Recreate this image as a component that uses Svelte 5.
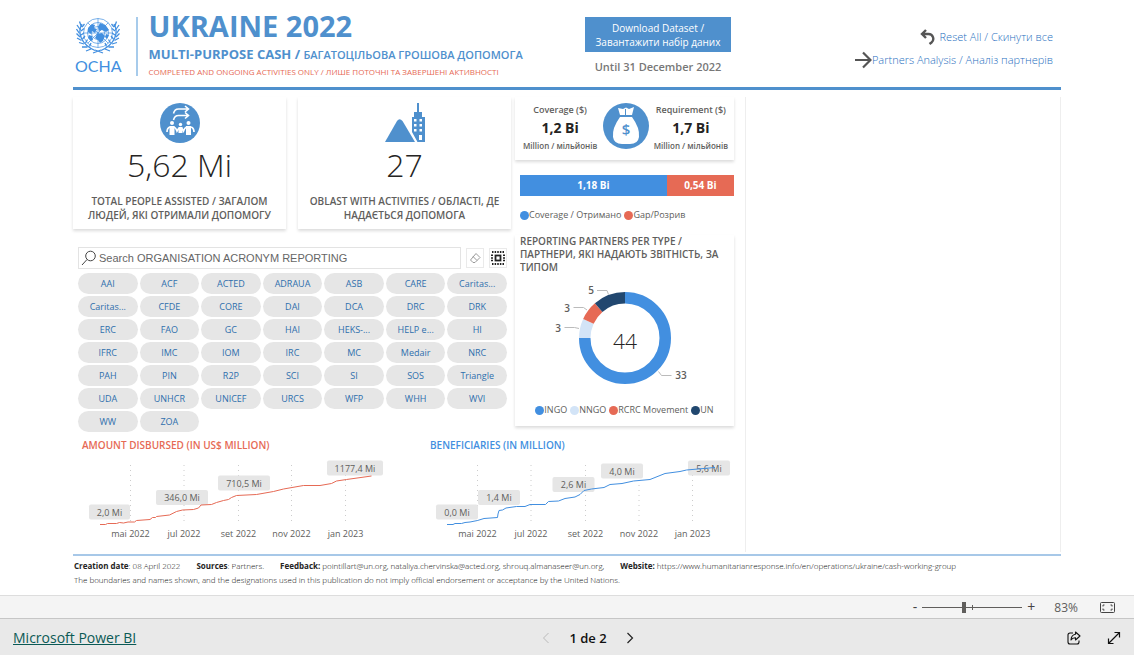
<script lang="ts">
	interface ChartLabel {
		x: number;
		y: number;
		width: number;
		text: string;
	}

	interface Chart {
		id: string;
		title: string;
		points: string;
		ticks: number[];
		labels: ChartLabel[];
	}

	const organisations = [
		'AAI', 'ACF', 'ACTED', 'ADRAUA', 'ASB', 'CARE', 'Caritas...',
		'Caritas...', 'CFDE', 'CORE', 'DAI', 'DCA', 'DRC', 'DRK',
		'ERC', 'FAO', 'GC', 'HAI', 'HEKS-...', 'HELP e...', 'HI',
		'IFRC', 'IMC', 'IOM', 'IRC', 'MC', 'Medair', 'NRC',
		'PAH', 'PIN', 'R2P', 'SCI', 'SI', 'SOS', 'Triangle',
		'UDA', 'UNHCR', 'UNICEF', 'URCS', 'WFP', 'WHH', 'WVI',
		'WW', 'ZOA'
	];

	const months = ['mai 2022', 'jul 2022', 'set 2022', 'nov 2022', 'jan 2023'];

	const charts: Chart[] = [
		{
			id: 'disbursed',
			title: 'AMOUNT DISBURSED (IN US$ MILLION)',
			points:
				'18,69.5 23.5,69.5 25.5,68.5 34.5,68.5 37.5,67.5 41.5,68 46,67 52.5,67 54.5,65.5 68,64.5 70.5,62.5 73.5,62.5 74.5,61.5 87.5,60 94.5,56.5 100.5,55 111.5,54.5 116.5,53 119,50 129.5,49.5 134.5,47.5 141.5,45.5 146.5,44.5 149.5,42.5 154.5,40.5 174.5,39.5 191.5,36.5 201.5,34 221.5,30.5 238,30.5 249.5,28.5 254.5,26 264.5,24.5 289.5,21',
			ticks: [48.5, 102, 156.5, 209.5, 263.5],
			labels: [
				{ x: 7, y: 49.5, width: 41, text: '2,0 Mi' },
				{ x: 74, y: 35, width: 52, text: '346,0 Mi' },
				{ x: 136, y: 20.5, width: 52, text: '710,5 Mi' },
				{ x: 245, y: 5.5, width: 56, text: '1177,4 Mi' }
			]
		},
		{
			id: 'beneficiaries',
			title: 'BENEFICIARIES (IN MILLION)',
			points:
				'17,69.5 23,69.5 25,68.5 31.5,68.5 35,67.5 40,67 47.5,65.5 54,63.5 67.5,62.5 68,59 69,55.5 72.5,55 76,53 86.5,51.5 95,51.5 100,49.5 115.5,49.5 118.5,46.5 128.5,46 135,43.5 145,42 150,39.5 154,35.5 161.5,34 174,32.5 180,29.5 192,28.5 203.5,26 220,24.5 235,18.5 250,16.5 256.5,15 285,12.5',
			ticks: [47.5, 101, 155.5, 209, 262.5],
			labels: [
				{ x: 6, y: 49.5, width: 42, text: '0,0 Mi' },
				{ x: 48, y: 35, width: 42, text: '1,4 Mi' },
				{ x: 122.5, y: 22, width: 42, text: '2,6 Mi' },
				{ x: 171, y: 8.5, width: 42, text: '4,0 Mi' },
				{ x: 258, y: 5.5, width: 42, text: '5,6 Mi' }
			]
		}
	];

	const partners = [
		{ name: 'INGO', count: 33, start: 0, color: '#428fe0' },
		{ name: 'NNGO', count: 3, start: 33, color: '#d3e4f7' },
		{ name: 'RCRC Movement', count: 3, start: 36, color: '#e66a55' },
		{ name: 'UN', count: 5, start: 39, color: '#21476f' }
	];

	const funding = [
		{ name: 'Coverage / Отримано', value: 1.18, label: '1,18 Bi', color: '#428fe0' },
		{ name: 'Gap/Розрив', value: 0.54, label: '0,54 Bi', color: '#e66a55' }
	];

	let zoom = $state(83);
	let search = $state('');

	function donutArc(start: number, count: number): string {
		const total = 44;
		const radius = 40.25;
		const point = (value: number) => {
			const angle = (value / total) * Math.PI * 2;
			return `${109 + radius * Math.sin(angle)} ${55 - radius * Math.cos(angle)}`;
		};
		const large = count > total / 2 ? 1 : 0;
		return `M${point(start)}A${radius} ${radius} 0 ${large} 1 ${point(start + count)}`;
	}
</script>

<div class="page">
	<main class="report">
		<header class="report-header">
			<div class="brand">
				<div class="logo">
					<svg width="44" height="38" viewBox="0 0 44 38" fill="none" stroke="#428fe0" aria-hidden="true">
						<g stroke-width="0.7">
							<circle cx="22" cy="16" r="14.5" />
							<circle cx="22" cy="16" r="10.5" />
							<circle cx="22" cy="16" r="6.5" />
							<path d="M22 1.5v29M7.500 16h29M11.700 5.700l20.600 20.600M32.300 5.700L11.700 26.300" />
						</g>
						<path d="M12 11l4-4 3 1-1 3 3 1-2 4-3-2-1 3-3-2zM24 6l5 2 4 5-3 2-4-2-3 1-1-4zM21 17l5-1 3 3-2 5-3 2-2-3-3-2zM13 18l3 1 1 4-2 1-3-3zM30 17l3 1-2 4-2-2z" fill="#428fe0" stroke="none" />
						<g stroke-width="1.300">
							<path d="M6 7C1 16 5 27 19 33.500M38 7c5 9 1 20-13 26.500" />
							<path d="M5.500 10L3.500 4.500M4.500 13L1 8M3.500 16.500L.500 12M4 20L.500 16.500M5.500 23.500L1 21M8 27l-5-1.500M11.500 30l-5.500 0M15 32l-5 2M6 10l2.500-3M5 14l3-2.500M5 18l3-2M6.500 22l2.500-3M9.500 26l2-3.500M13.500 29.500l1.500-3.500" />
							<path d="M38.500 10l2-5.500M39.500 13L43 8M40.500 16.500l3-4.500M40 20l3.500-3.500M38.500 23.500L43 21M36 27l5-1.500M32.500 30l5.500 0M29 32l5 2M38 10l-2.500-3M39 14l-3-2.500M39 18l-3-2M37.500 22L35 19M34.500 26l-2-3.500M30.500 29.500L29 26" />
							<path d="M19 33l8 3M25 33l-8 3" />
						</g>
					</svg>
					<span>OCHA</span>
				</div>
				<div class="titles">
					<h1>UKRAINE 2022</h1>
					<p class="subtitle">MULTI-PURPOSE CASH / <small>БАГАТОЦІЛЬОВА ГРОШОВА ДОПОМОГА</small></p>
					<p class="status">COMPLETED AND ONGOING ACTIVITIES ONLY / ЛИШЕ ПОТОЧНІ ТА ЗАВЕРШЕНІ АКТИВНОСТІ</p>
				</div>
			</div>
			<div class="download">
				<button type="button">Download Dataset /<br />Завантажити набір даних</button>
				<p>Until 31 December 2022</p>
			</div>
			<nav class="actions" aria-label="Report actions">
				<a href="#reset" class="reset">
					<svg width="15" height="16" viewBox="0 0 15 16" fill="none" stroke="#555" stroke-width="2.400" aria-hidden="true">
						<path d="M6 1L2 5l4 4M2 5h6.500a4.800 4.800 0 0 1 3 8.500L9.500 15" />
					</svg>
					Reset All / Скинути все
				</a>
				<a href="#partners">
					<svg width="18" height="18" viewBox="0 0 18 18" fill="none" stroke="#555" stroke-width="2.200" aria-hidden="true">
						<path d="M1 9h15M9 1.500L16.500 9 9 16.500" />
					</svg>
					Partners Analysis / Аналіз партнерів
				</a>
			</nav>
		</header>

		<div class="content">
			<div class="dashboard">
				<div class="overview">
					<div class="kpis">
						<section class="card kpi">
							<svg width="40" height="40" viewBox="0 0 40 40" aria-hidden="true">
								<circle cx="20" cy="20" r="20" fill="#4f90cd" />
								<g fill="none" stroke="#fff" stroke-width="1.600">
									<path d="M13.500 10.500q1-4.500 5-4.500H28M25 3l3.500 3L25 9" />
									<path d="M13.500 17q1-4.500 5-4.500H28M25 9.500l3.500 3-3.500 3" />
								</g>
								<g fill="#fff">
									<circle cx="12" cy="20" r="2" />
									<circle cx="20.500" cy="21.500" r="1.700" />
									<circle cx="28.500" cy="20" r="2" />
									<path d="M9.500 23h5v9h-5zM26 23h5v9h-5zM18.500 24h4v6h-4z" />
								</g>
								<path d="M10 24q-3 1-3 5M14 24q2 1 3 4l2-3M31 24q3 1 3 5M26.500 24q-2 1-3 4l-2-3" fill="none" stroke="#fff" stroke-width="1.700" />
							</svg>
							<strong>5,62 Mi</strong>
							<h2>TOTAL PEOPLE ASSISTED / ЗАГАЛОМ ЛЮДЕЙ, ЯКІ ОТРИМАЛИ ДОПОМОГУ</h2>
						</section>
						<section class="card kpi">
							<svg width="40" height="40" viewBox="0 0 40 40" aria-hidden="true">
								<path d="M0 39l12-21q2.500-3.500 5.500 0L30 39z" fill="#4f90cd" />
								<path d="M32 0h2v9h3v5h3v25h-7.500L27 29V14h2V9h3z" fill="#4f90cd" />
								<path d="M29 16h2.500v2.500H29zM34.500 16H37v2.500h-2.500zM29 21h2.500v2.500H29zM34.500 21H37v2.500h-2.500zM29 26h2.500v2.500H29zM34.500 26H37v2.500h-2.500zM34 32h3v5h-3z" fill="#fff" />
								<path d="M26 29.500L31.500 39" stroke="#fff" />
							</svg>
							<strong>27</strong>
							<h2>OBLAST WITH ACTIVITIES / ОБЛАСТІ, ДЕ НАДАЄТЬСЯ ДОПОМОГА</h2>
						</section>
					</div>

					<div class="slicer">
						<div class="search-row">
							<div class="search-box">
								<svg width="16" height="16" viewBox="0 0 16 16" fill="none" stroke="#444" aria-hidden="true">
									<circle cx="9.500" cy="6" r="4.800" />
									<path d="M6 9.500L1 15" />
								</svg>
								<input
									type="text"
									aria-label="Search organisation"
									placeholder="Search ORGANISATION ACRONYM REPORTING"
									bind:value={search}
								/>
							</div>
							<button type="button" class="tool" aria-label="Clear search" onclick={() => (search = '')}>
								<svg width="12" height="12" viewBox="0 0 12 12" fill="none" stroke="#999" aria-hidden="true">
									<path d="M7 1.500L11 5.500 6 10.500H4L1.500 8zM4 4.500l4 4" />
								</svg>
							</button>
							<button type="button" class="tool" aria-label="Select all">
								<svg width="14" height="14" viewBox="0 0 14 14" fill="none" stroke="#222" aria-hidden="true">
									<path d="M1 1h12M1 13h12" stroke-width="2" stroke-dasharray="1.500 1.125" />
									<path d="M1 3.500v8M13 3.500v8" stroke-width="2" stroke-dasharray="1.500 1.125" />
									<rect x="4.500" y="4.500" width="5" height="5" stroke-width="1.800" />
								</svg>
							</button>
						</div>
						<div class="pills">
							{#each organisations as organisation}
								<button type="button">{organisation}</button>
							{/each}
						</div>
					</div>
				</div>

				<div class="finance">
					<section class="card coverage">
						<div class="figure">
							<h2>Coverage ($)</h2>
							<strong>1,2 Bi</strong>
							<small>Million / мільйонів</small>
						</div>
						<svg width="46" height="46" viewBox="0 0 46 46" aria-hidden="true">
							<circle cx="23" cy="23" r="23" fill="#4f90cd" />
							<path d="M15 5l5 1 3-1.500L26 6l5-2-2 8H17zM17 14h12q8 11 7 20-1 7-9 7h-8q-8 0-9-7-1-9 7-20z" fill="#fff" />
							<path d="M22.500 6v6" stroke="#4f90cd" />
							<text x="23" y="32" text-anchor="middle" fill="#4f90cd" font-size="15" font-weight="600">$</text>
						</svg>
						<div class="figure">
							<h2>Requirement ($)</h2>
							<strong>1,7 Bi</strong>
							<small>Million / мільйонів</small>
						</div>
					</section>

					<div class="stacked">
						{#each funding as part}
							<div style="flex-grow: {part.value}; background: {part.color}">{part.label}</div>
						{/each}
					</div>
					<ul class="legend">
						{#each funding as part}
							<li><i style="background: {part.color}"></i>{part.name}</li>
						{/each}
					</ul>

					<section class="card partners">
						<h2>REPORTING PARTNERS PER TYPE / ПАРТНЕРИ, ЯКІ НАДАЮТЬ ЗВІТНІСТЬ, ЗА ТИПОМ</h2>
						<svg width="218" height="110" viewBox="0 0 218 110" role="img" aria-label="Reporting partners per type">
							<g fill="none" stroke-width="11.500">
								{#each partners as partner}
									<path d={donutArc(partner.start, partner.count)} stroke={partner.color} />
								{/each}
							</g>
							<g fill="none" stroke="#bbb">
								<path d="M81 7.500h10l1.500 4M57.500 24.500h10l3.500 2.500M48.500 44.500h10l4.500 1M142.500 88.500l3 4h10" />
							</g>
							<g class="callouts">
								<text x="75" y="11">5</text>
								<text x="51" y="29">3</text>
								<text x="42" y="49">3</text>
								<text x="165" y="96">33</text>
							</g>
							<text class="total" x="109" y="66">44</text>
						</svg>
						<ul class="legend">
							{#each partners as partner}
								<li><i style="background: {partner.color}"></i>{partner.name}</li>
							{/each}
						</ul>
					</section>
				</div>

				<div class="charts">
					{#each charts as chart}
						<section class="chart {chart.id}">
							<h2>{chart.title}</h2>
							<svg width="310" height="90" viewBox="0 0 310 90" role="img" aria-label={chart.title}>
								{#each chart.ticks as tick, i}
									<line x1={tick} x2={tick} y1="10" y2="70" />
									<text x={tick} y="82">{months[i]}</text>
								{/each}
								{#each chart.labels as label}
									<rect x={label.x} y={label.y} width={label.width} height="15" rx="2" />
									<text x={label.x + label.width / 2} y={label.y + 11}>{label.text}</text>
								{/each}
								<polyline points={chart.points} />
							</svg>
						</section>
					{/each}
				</div>
			</div>
			<div class="empty-panel"></div>
		</div>

		<footer class="notes">
			<p>
				<span><b>Creation date</b>: 08 April 2022</span>
				<span><b>Sources</b>: Partners.</span>
				<span><b>Feedback:</b> pointillart@un.org, nataliya.chervinska@acted.org, shrouq.almanaseer@un.org,</span>
				<span><b>Website:</b> https://www.humanitarianresponse.info/en/operations/ukraine/cash-working-group</span>
			</p>
			<p>The boundaries and names shown, and the designations used in this publication do not imply official endorsement or acceptance by the United Nations.</p>
		</footer>
	</main>

	<div class="zoom-bar">
		<button type="button" aria-label="Zoom out" onclick={() => (zoom -= 10)}>-</button>
		<input type="range" min="0" max="200" aria-label="Zoom" bind:value={zoom} />
		<button type="button" aria-label="Zoom in" onclick={() => (zoom += 10)}>+</button>
		<output>{zoom}%</output>
		<button type="button" aria-label="Fit to page">
			<svg width="15" height="11" viewBox="0 0 15 11" fill="none" stroke="#444" aria-hidden="true">
				<rect x="0.500" y="0.500" width="14" height="10" rx="1" />
				<path d="M3 4.500V3h1.500M10.500 3H12v1.500M12 6.500V8h-1.500M4.500 8H3V6.500" />
			</svg>
		</button>
	</div>

	<footer class="status-bar">
		<a href="#powerbi">Microsoft Power BI</a>
		<nav class="pager" aria-label="Pages">
			<button type="button" aria-label="Previous page" disabled>
				<svg width="8" height="12" viewBox="0 0 8 12" fill="none" stroke="#bbb" aria-hidden="true"><path d="M6.500 1l-5 5 5 5" /></svg>
			</button>
			<span>1 de 2</span>
			<button type="button" aria-label="Next page">
				<svg width="8" height="12" viewBox="0 0 8 12" fill="none" stroke="#222" stroke-width="1.200" aria-hidden="true"><path d="M1.500 1l5 5-5 5" /></svg>
			</button>
		</nav>
		<div class="share">
			<button type="button" aria-label="Share">
				<svg width="14" height="14" viewBox="0 0 14 14" fill="none" stroke="#111" stroke-width="1.100" aria-hidden="true">
					<path d="M6 2H3a2 2 0 0 0-2 2v7a2 2 0 0 0 2 2h7a2 2 0 0 0 2-2V9.500" />
					<path d="M8.500 1L13 5 8.500 9V6.700Q5.500 6.500 4 9q.300-5 4.500-5.700z" stroke-linejoin="round" />
				</svg>
			</button>
			<button type="button" aria-label="Full screen">
				<svg width="14" height="14" viewBox="0 0 14 14" fill="none" stroke="#111" stroke-width="1.200" aria-hidden="true">
					<path d="M1.500 12.500l11-11M7.500 1.500h5v5M1.500 7.500v5h5" />
				</svg>
			</button>
		</div>
	</footer>
</div>

<style>
	:global(body) {
		margin: 0;
		background: #fff;
	}

	.page {
		display: flex;
		flex-direction: column;
		min-height: 100vh;
		font-family: 'Open Sans', 'Noto Sans', sans-serif;
		color: #605e5c;
	}

	h1,
	h2,
	p,
	ul {
		margin: 0;
		padding: 0;
	}

	button {
		padding: 0;
		border: 0;
		background: none;
		font-family: inherit;
		cursor: pointer;
	}

	svg {
		display: block;
		flex-shrink: 0;
	}

	.report {
		flex: 1;
		padding: 0 73px;
	}

	.report-header {
		display: grid;
		grid-template-columns: 512fr 146px 330fr;
		height: 87px;
		border-bottom: 3px solid #4f90cd;
		white-space: nowrap;
	}

	.brand {
		display: flex;
		align-items: flex-start;
	}

	.logo {
		display: flex;
		flex-direction: column;
		align-items: center;
		height: 59px;
		margin-top: 17px;
		padding: 0 14px 0 2px;
		border-right: 2px solid #a7cbeb;
		color: #428fe0;
		font: 16px/22px Lato, sans-serif;
	}

	.titles {
		padding: 8px 0 0 11px;
		color: #4f90cd;
	}

	h1 {
		font-size: 29px;
		line-height: 36px;
		font-weight: 700;
	}

	.subtitle {
		font-size: 13px;
		line-height: 20px;
		font-weight: 700;
	}

	.subtitle small {
		font-size: 11px;
		font-weight: 600;
	}

	.status {
		font-size: 8px;
		line-height: 14px;
		color: #e66a55;
	}

	.download {
		padding-top: 17px;
		text-align: center;
	}

	.download button {
		width: 100%;
		padding: 4px 0 3px;
		background: #4f90cd;
		color: #fff;
		font-size: 10px;
		line-height: 14px;
	}

	.download p {
		margin-top: 6px;
		font-size: 11px;
		line-height: 18px;
		font-weight: 600;
		color: #777;
	}

	.actions {
		display: flex;
		flex-direction: column;
		align-items: flex-end;
		gap: 3px;
		padding: 27px 8px 0 0;
	}

	.actions a {
		display: flex;
		align-items: center;
		font-size: 11px;
		line-height: 20px;
		font-weight: 300;
		color: #1f6fc0;
		text-decoration: none;
	}

	.actions .reset {
		gap: 5px;
	}

	.content {
		display: grid;
		grid-template-columns: 672fr 316fr;
		padding-top: 7px;
	}

	.dashboard {
		display: grid;
		grid-template-columns: 438fr 219fr;
		column-gap: 4px;
		padding: 0 11px 7px 0;
	}

	.card {
		background: #fff;
		box-shadow: 0 2px 3px rgba(0, 0, 0, 0.14);
	}

	.kpis {
		display: grid;
		grid-template-columns: 1fr 1fr;
		gap: 12px;
	}

	.kpi {
		display: flex;
		flex-direction: column;
		align-items: center;
		height: 126px;
		padding-top: 6px;
		text-align: center;
	}

	.kpi strong {
		font-size: 32px;
		line-height: 44px;
		font-weight: 300;
		color: #252423;
	}

	.kpi h2 {
		margin-top: 7px;
		font-size: 10px;
		line-height: 14px;
		font-weight: 600;
	}

	.slicer {
		padding: 18px 4px 0 5px;
	}

	.search-row {
		display: flex;
		align-items: center;
		gap: 5px;
	}

	.search-box {
		display: flex;
		align-items: center;
		flex: 1;
		height: 20px;
		padding-left: 2px;
		border: 1px solid #e3e3e3;
	}

	.search-box input {
		flex: 1;
		padding: 0 0 0 2px;
		border: 0;
		outline: 0;
		font: 11px/16px 'Liberation Sans', Arial, sans-serif;
		color: #444;
	}

	.search-box input::placeholder {
		color: #666;
	}

	.tool {
		display: grid;
		place-items: center;
		width: 18px;
		height: 20px;
		border: 1px solid #eaeaea;
	}

	.pills {
		display: grid;
		grid-template-columns: repeat(7, 1fr);
		gap: 2px;
		margin-top: 4px;
	}

	.pills button {
		height: 21px;
		border-radius: 11px;
		background: #e6e6e6;
		color: #2f6fad;
		font-size: 9px;
		line-height: 20px;
	}

	.finance {
		display: flex;
		flex-direction: column;
	}

	.coverage {
		display: flex;
		justify-content: space-between;
		height: 57px;
		padding: 6px 6px 0 8px;
	}

	.figure {
		display: flex;
		flex-direction: column;
		align-items: center;
		white-space: nowrap;
	}

	.figure h2 {
		font-size: 9px;
		line-height: 13px;
		font-weight: 600;
	}

	.figure strong {
		font-size: 14px;
		line-height: 24px;
		color: #252423;
	}

	.figure small {
		font-size: 8px;
		line-height: 12px;
		font-weight: 600;
	}

	.stacked {
		display: flex;
		margin: 15px 0 12px 5px;
	}

	.stacked div {
		flex-basis: 0;
		color: #fff;
		font-size: 10px;
		line-height: 21px;
		font-weight: 700;
		text-align: center;
	}

	.legend {
		display: flex;
		gap: 3px;
		padding-left: 5px;
		list-style: none;
		font-size: 9px;
		line-height: 14px;
		color: #605e5c;
		white-space: nowrap;
	}

	.legend li {
		display: flex;
		align-items: center;
	}

	.legend i {
		width: 9px;
		height: 9px;
		border-radius: 50%;
	}

	.partners {
		display: flex;
		flex-direction: column;
		align-items: center;
		height: 191px;
		margin-top: 13px;
	}

	.partners h2 {
		align-self: stretch;
		padding-left: 5px;
		font-size: 10px;
		line-height: 13px;
		font-weight: 600;
	}

	.partners svg {
		margin: 9px 0 10px;
	}

	.partners .legend {
		padding: 0;
	}

	.callouts {
		font-size: 10px;
		fill: #605e5c;
		font-weight: 600;
		text-anchor: middle;
	}

	.total {
		font-size: 21px;
		font-weight: 300;
		fill: #252423;
		text-anchor: middle;
	}

	.charts {
		display: grid;
		grid-column: 1 / -1;
		grid-template-columns: 348fr 304fr;
		margin-top: 6px;
		padding-left: 9px;
	}

	.chart {
		min-width: 0;
	}

	.chart h2 {
		font-size: 10px;
		line-height: 14px;
		font-weight: 600;
	}

	.chart svg {
		margin-top: 3px;
	}

	.chart text {
		font-size: 9px;
		fill: #605e5c;
		text-anchor: middle;
	}

	.chart line {
		stroke: #ccc;
		stroke-dasharray: 1 4;
	}

	.chart rect {
		fill: #e6e6e6;
	}

	.chart polyline {
		fill: none;
	}

	.disbursed h2 {
		color: #e66a55;
	}

	.disbursed polyline {
		stroke: #e66a55;
	}

	.beneficiaries h2 {
		color: #428fe0;
	}

	.beneficiaries polyline {
		stroke: #428fe0;
	}

	.empty-panel {
		border: 1px solid #eee;
		border-width: 0 1px;
	}

	.notes {
		margin-top: 2px;
		padding: 3px 0 7px 1px;
		border-top: 2px solid #a7c8e8;
		font-size: 8px;
		line-height: 14px;
		font-weight: 300;
		color: #111;
		white-space: nowrap;
	}

	.notes p {
		display: flex;
		gap: 16px;
	}

	.notes b {
		font-weight: 700;
		color: #252423;
	}

	.zoom-bar {
		display: flex;
		align-items: center;
		justify-content: flex-end;
		height: 22px;
		padding-right: 19px;
		border-top: 1px solid #ddd;
		background: #f4f4f4;
		font-size: 12px;
	}

	.zoom-bar button {
		color: #444;
		font-size: 14px;
		line-height: 20px;
	}

	.zoom-bar input {
		width: 100px;
		height: 12px;
		margin: 0 5px;
		appearance: none;
		background:
			linear-gradient(#605e5c, #605e5c) 50px center / 1px 5px no-repeat,
			linear-gradient(#605e5c, #605e5c) center / 100% 1px no-repeat;
	}

	.zoom-bar input::-webkit-slider-thumb {
		appearance: none;
		width: 4px;
		height: 11px;
		background: #605e5c;
	}

	.zoom-bar output {
		margin: 0 22px 0 19px;
	}

	.status-bar {
		display: grid;
		grid-template-columns: 1fr auto 1fr;
		align-items: center;
		height: 34px;
		padding: 2px 13px 0;
		border-top: 1px solid #c6c6c6;
		background: #e9e9e9;
		font-size: 13px;
		line-height: 20px;
	}

	.status-bar a {
		color: #0b5a55;
		font-size: 14px;
	}

	.pager {
		display: flex;
		align-items: center;
		gap: 19px;
		padding-left: 42px;
		font-weight: 600;
		color: #111;
	}

	.share {
		display: flex;
		justify-content: flex-end;
		gap: 26px;
	}
</style>
